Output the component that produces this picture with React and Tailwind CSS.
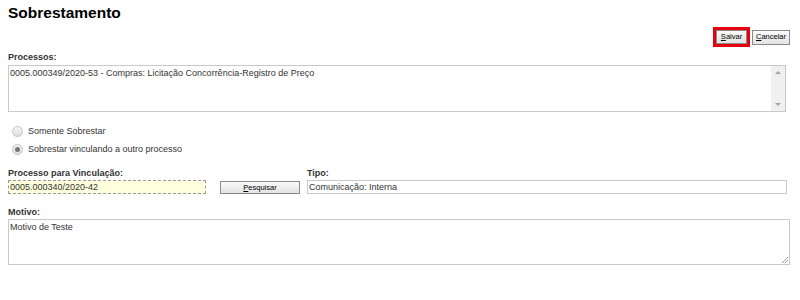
import React from 'react';

const font = { fontFamily: '"Liberation Sans", Arial, sans-serif' };

// Botão no estilo do SEI (com primeira letra sublinhada)
const Btn = ({ first, rest, className = '' }) => (
    <button className={`border border-[#8a8a8a] bg-gradient-to-b from-[#fafafa] to-[#e3e3e3] text-[7.5px] leading-none text-black ${className}`}>
        <span className="underline">{first}</span>{rest}
    </button>
);

const Radio = ({ checked, label }) => (
    <label className="flex items-center gap-[5px] text-[9px] text-[#333] h-[17px] shrink-0">
        <span className="w-[11px] h-[11px] rounded-full border border-[#c4c4c4] bg-gradient-to-b from-[#f4f4f4] to-[#e0e0e0] flex items-center justify-center">
            {checked && <span className="w-[5px] h-[5px] rounded-full bg-[#777]"></span>}
        </span>
        {label}
    </label>
);

export default function App() {
    return (
        <div className="w-[800px] h-[300px] bg-white px-[8px] pt-[3px] text-black" style={font}>
            {/* Titulo */}
            <h1 className="text-[15.5px] font-bold leading-[20px]">Sobrestamento</h1>

            {/* Ações */}
            <div className="flex justify-end items-center gap-[2px] mt-[4px] pr-[2px] h-[20px]">
                <div className="border-[3px] border-[#e4000f]">
                    <Btn first="S" rest="alvar" className="w-[31px] h-[14px] block" />
                </div>
                <Btn first="C" rest="ancelar" className="w-[38px] h-[15px]" />
            </div>

            {/* Processos */}
            <div className="mt-[4px] text-[9px] font-bold leading-[12px] text-[#333]">Processos:</div>
            <div className="mt-[2px] w-[778px] h-[47px] border border-[#c9c9c9] flex">
                <div className="flex-1 text-[9px] leading-[12px] px-[1px] pt-[1px] text-[#333]">
                    0005.000349/2020-53 - Compras: Licitação Concorrência-Registro de Preço
                </div>
                <div className="w-[14px] bg-[#f0f0f0] flex flex-col justify-between items-center py-[5px]">
                    <svg width="6" height="3" viewBox="0 0 6 3"><path d="M0 3 L3 0 L6 3 Z" fill="#a3a3a3" /></svg>
                    <svg width="6" height="3" viewBox="0 0 6 3"><path d="M0 0 L3 3 L6 0 Z" fill="#a3a3a3" /></svg>
                </div>
            </div>

            {/* Opções */}
            <div className="mt-[11px] pl-[4px] flex flex-col gap-[1px]">
                <Radio label="Somente Sobrestar" />
                <Radio checked label="Sobrestar vinculando a outro processo" />
            </div>

            {/* Vinculação */}
            <div className="mt-[9px] flex items-end">
                <div className="w-[198px]">
                    <div className="text-[9px] font-bold leading-[12px] text-[#333]">Processo para Vinculação:</div>
                    <div className="mt-[1px] h-[14px] border border-dashed border-[#999] bg-[#ffffdd] text-[9px] leading-[12px] px-[1px] text-[#333]">0005.000340/2020-42</div>
                </div>
                <button className="ml-[14px] w-[80px] h-[13px] border border-[#8a8a8a] bg-gradient-to-b from-[#fafafa] to-[#e3e3e3] text-[7.5px] leading-none text-black">
                    <span className="underline">P</span>esquisar
                </button>
                <div className="ml-[7px] w-[480px]">
                    <div className="text-[9px] font-bold leading-[12px] text-[#333]">Tipo:</div>
                    <div className="mt-[1px] h-[14px] border border-[#c9c9c9] text-[9px] leading-[12px] px-[1px] text-[#333]">Comunicação: Interna</div>
                </div>
            </div>

            {/* Motivo */}
            <div className="mt-[12px] text-[9px] font-bold leading-[12px] text-[#333]">Motivo:</div>
            <div className="mt-[1px] relative w-[782px] h-[46px] border border-[#c9c9c9] text-[9px] leading-[12px] px-[1px] pt-[1px] text-[#333]">
                Motivo de Teste
                <svg className="absolute right-0 bottom-0" width="8" height="8" viewBox="0 0 8 8">
                    <path d="M7 1 L1 7 M7 4 L4 7" stroke="#999" strokeWidth="1" />
                </svg>
            </div>
        </div>
    );
}
